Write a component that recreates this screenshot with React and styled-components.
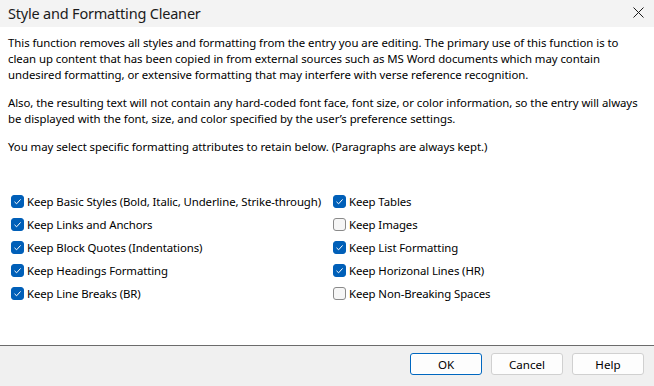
import React from 'react'
import styled, { createGlobalStyle } from 'styled-components'

const GlobalStyle = createGlobalStyle`
html, body {
    margin: 0;
    padding: 0;
    background: #ffffff;
}
body {
    font-family: "Noto Sans", "Open Sans", sans-serif;
    color: #000;
}
`

const LEFT = [
    { label: 'Keep Basic Styles (Bold, Italic, Underline, Strike-through)', checked: true },
    { label: 'Keep Links and Anchors', checked: true },
    { label: 'Keep Block Quotes (Indentations)', checked: true },
    { label: 'Keep Headings Formatting', checked: true },
    { label: 'Keep Line Breaks (BR)', checked: true },
]

const RIGHT = [
    { label: 'Keep Tables', checked: true },
    { label: 'Keep Images', checked: false },
    { label: 'Keep List Formatting', checked: true },
    { label: 'Keep Horizonal Lines (HR)', checked: true },
    { label: 'Keep Non-Breaking Spaces', checked: false },
]

function CheckItem({ label, checked }) {
    return (
        <Item>
            <Box checked={checked}>
                {checked && (
                    <svg width="9" height="9" viewBox="0 0 9 9">
                        <path d="M1.5 4.8 L3.6 6.8 L7.6 2.4" fill="none" stroke="#fff" strokeWidth="1" />
                    </svg>
                )}
            </Box>
            <Label>{label}</Label>
        </Item>
    )
}

export default function App() {
    return (
        <>
            <GlobalStyle />
            <Window>
                <TitleBar>
                    <Title>Style and Formatting Cleaner</Title>
                    <Close>
                        <svg width="11" height="11" viewBox="0 0 11 11">
                            <path d="M0.5 0.5 L10.5 10.5 M10.5 0.5 L0.5 10.5" stroke="#1a1a1a" strokeWidth="1" />
                        </svg>
                    </Close>
                </TitleBar>

                <Body>
                    <Para>
                        This function removes all styles and formatting from the entry you are editing. The primary use of this function is to
                        clean up content that has been copied in from external sources such as MS Word documents which may contain
                        undesired formatting, or extensive formatting that may interfere with verse reference recognition.
                    </Para>
                    <Para>
                        Also, the resulting text will not contain any hard-coded font face, font size, or color information, so the entry will always
                        be displayed with the font, size, and color specified by the user’s preference settings.
                    </Para>
                    <Para>You may select specific formatting attributes to retain below. (Paragraphs are always kept.)</Para>

                    <Options>
                        <Column>
                            {LEFT.map(o => <CheckItem key={o.label} {...o} />)}
                        </Column>
                        <Column>
                            {RIGHT.map(o => <CheckItem key={o.label} {...o} />)}
                        </Column>
                    </Options>
                </Body>

                <Footer>
                    <Button primary>OK</Button>
                    <Button>Cancel</Button>
                    <Button>Help</Button>
                </Footer>
            </Window>
        </>
    )
}

// Styled Components
const Window = styled.div`
width: 654px;
height: 386px;
display: flex;
flex-direction: column;
background: #ffffff;
overflow: hidden;
`

const TitleBar = styled.div`
height: 27px;
flex: 0 0 27px;
background: #f3f3f3;
display: flex;
align-items: center;
justify-content: space-between;
padding: 0 10px 0 8px;
box-sizing: border-box;
`

const Title = styled.div`
font-size: 14.5px;
color: #1b1b1b;
letter-spacing: -0.2px;
margin-top: -1px;
`

const Close = styled.div`
width: 11px;
height: 11px;
display: flex;
margin-top: -2px;
`

const Body = styled.div`
flex: 1;
padding: 8px 8px 0 8px;
font-size: 11.4px;
line-height: 16px;
`

const Para = styled.p`
margin: 0 0 12px 0;
width: 640px;
letter-spacing: -0.05px;
`

const Options = styled.div`
display: grid;
grid-template-columns: 322px 1fr;
margin-top: 35px;
padding-left: 3px;
`

const Column = styled.div`
display: flex;
flex-direction: column;
`

const Item = styled.div`
display: flex;
align-items: center;
height: 23px;
line-height: 16px;
gap: 3px;
`

const Box = styled.span`
width: 13px;
height: 13px;
box-sizing: border-box;
border-radius: 3px;
display: flex;
align-items: center;
justify-content: center;
background: ${p => (p.checked ? '#005fb8' : '#f6f6f6')};
border: 1px solid ${p => (p.checked ? '#005fb8' : '#8a8a8a')};
`

const Label = styled.span`
font-size: 11.4px;
color: #000;
letter-spacing: -0.1px;
`

const Footer = styled.div`
flex: 0 0 41px;
height: 41px;
box-sizing: border-box;
border-top: 1px solid #6b6b6b;
background: #f0f0f0;
display: flex;
justify-content: flex-end;
align-items: flex-start;
padding: 7px 10px 0 0;
gap: 9px;
`

const Button = styled.button`
width: 72px;
height: 22px;
box-sizing: border-box;
border-radius: 3px;
background: #fdfdfd;
border: 1px solid ${p => (p.primary ? '#0067c0' : '#d0d0d0')};
box-shadow: ${p => (p.primary ? 'inset 0 0 0 1px #ffffff' : 'none')};
font-family: "Noto Sans", "Open Sans", sans-serif;
font-size: 11.6px;
color: #000;
padding: 0;
cursor: pointer;
`
